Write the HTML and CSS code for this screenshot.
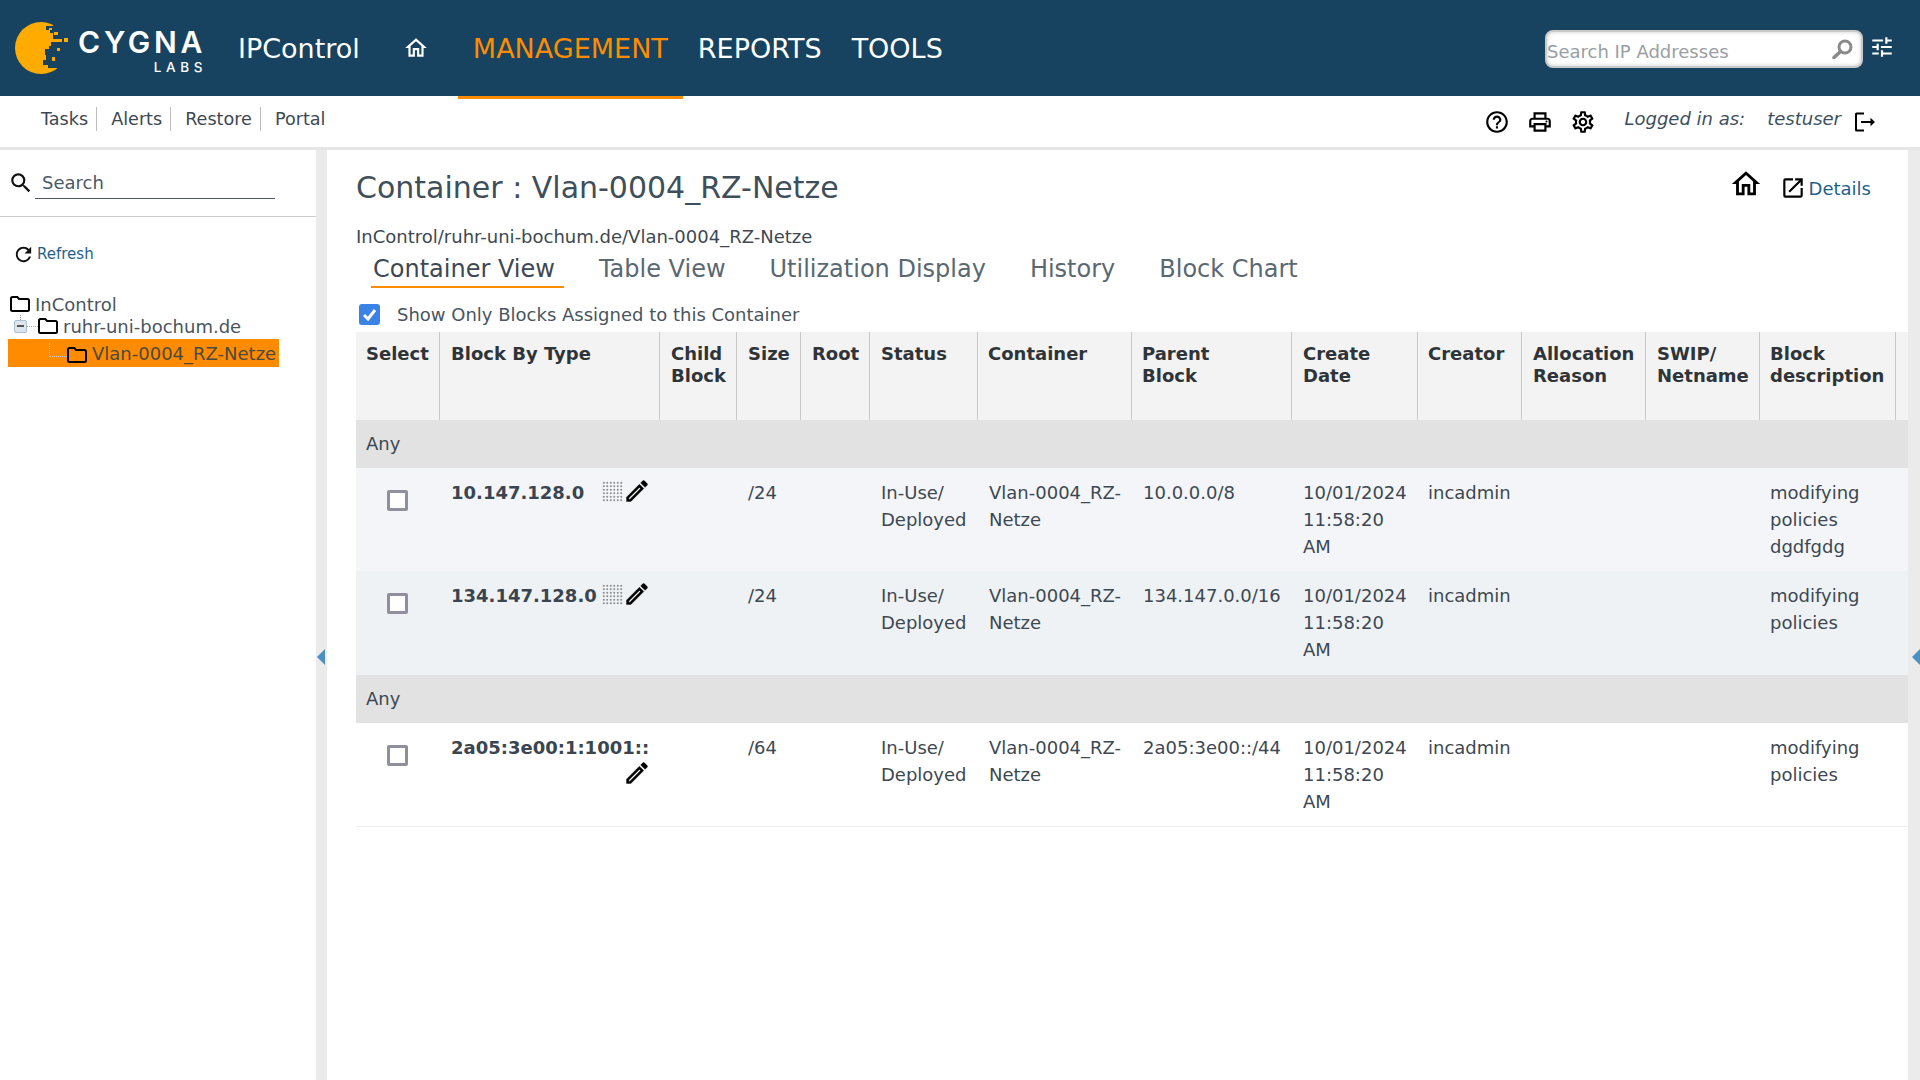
FILE: index.html
```html
<!DOCTYPE html>
<html lang="en">
<head>
<meta charset="utf-8">
<title>IPControl</title>
<link rel="stylesheet" href="styles.css">
</head>
<body>
<svg class="defs" aria-hidden="true">
  <symbol id="i-home" viewBox="0 0 24 24"><path d="M12 5.69l5 4.5V18h-2v-6H9v6H7v-7.81l5-4.5M12 3L2 12h3v8h6v-6h2v6h6v-8h3L12 3z"/></symbol>
  <symbol id="i-search" viewBox="0 0 24 24"><path d="M15.5 14h-.79l-.28-.27A6.471 6.471 0 0 0 16 9.5 6.5 6.5 0 1 0 9.5 16c1.61 0 3.09-.59 4.23-1.57l.27.28v.79l5 4.99L20.49 19l-4.99-5zm-6 0C7.01 14 5 11.99 5 9.5S7.01 5 9.5 5 14 7.01 14 9.5 11.99 14 9.5 14z"/></symbol>
  <symbol id="i-lens" viewBox="0 0 22 20"><circle cx="9" cy="8" r="6" fill="none" stroke="#8a8a8a" stroke-width="3"/><path d="M13.500 12.500L20 18.500" fill="none" stroke="#8a8a8a" stroke-width="3.600" stroke-linecap="round"/></symbol>
  <symbol id="i-tune" viewBox="0 0 24 24"><path d="M3 17v2h6v-2H3zM3 5v2h10V5H3zm10 16v-2h8v-2h-8v-2h-2v6h2zM7 9v2H3v2h4v2h2V9H7zm14 4v-2H11v2h10zm-6-4h2V7h4V5h-4V3h-2v6z"/></symbol>
  <symbol id="i-help" viewBox="0 0 24 24"><path d="M11 18h2v-2h-2v2zm1-16C6.48 2 2 6.48 2 12s4.48 10 10 10 10-4.48 10-10S17.52 2 12 2zm0 18c-4.41 0-8-3.59-8-8s3.59-8 8-8 8 3.59 8 8-3.59 8-8 8zm0-14c-2.21 0-4 1.79-4 4h2c0-1.1.9-2 2-2s2 .9 2 2c0 2-3 1.75-3 5h2c0-2.25 3-2.5 3-5 0-2.21-1.79-4-4-4z"/></symbol>
  <symbol id="i-print" viewBox="0 0 24 24"><path d="M19 8h-1V3H6v5H5c-1.66 0-3 1.34-3 3v6h4v4h12v-4h4v-6c0-1.66-1.34-3-3-3zM8 5h8v3H8V5zm8 12v2H8v-4h8v2zm2-2v-2H6v2H4v-4c0-.55.45-1 1-1h14c.55 0 1 .45 1 1v4h-2z"/><circle cx="18" cy="11.5" r="1"/></symbol>
  <symbol id="i-gear" viewBox="0 0 24 24"><path d="M19.43 12.98c.04-.32.07-.64.07-.98 0-.34-.03-.66-.07-.98l2.11-1.65c.19-.15.24-.42.12-.64l-2-3.46c-.09-.16-.26-.25-.44-.25-.06 0-.12.01-.17.03l-2.49 1c-.52-.4-1.08-.73-1.69-.98l-.38-2.65C14.46 2.18 14.25 2 14 2h-4c-.25 0-.46.18-.49.42l-.38 2.65c-.61.25-1.17.59-1.69.98l-2.49-1c-.06-.02-.12-.03-.18-.03-.17 0-.34.09-.43.25l-2 3.46c-.13.22-.07.49.12.64l2.11 1.65c-.04.32-.07.65-.07.98 0 .33.03.66.07.98l-2.11 1.65c-.19.15-.24.42-.12.64l2 3.46c.09.16.26.25.44.25.06 0 .12-.01.17-.03l2.49-1c.52.4 1.08.73 1.69.98l.38 2.65c.03.24.24.42.49.42h4c.25 0 .46-.18.49-.42l.38-2.65c.61-.25 1.17-.59 1.69-.98l2.49 1c.06.02.12.03.18.03.17 0 .34-.09.43-.25l2-3.46c.12-.22.07-.49-.12-.64l-2.11-1.65zm-1.98-1.71c.04.31.05.52.05.73 0 .21-.02.43-.05.73l-.14 1.13.89.7 1.08.84-.7 1.21-1.27-.51-1.04-.42-.9.68c-.43.32-.84.56-1.25.73l-1.06.43-.16 1.13-.2 1.35h-1.4l-.19-1.35-.16-1.13-1.06-.43c-.43-.18-.83-.41-1.23-.71l-.91-.7-1.06.43-1.27.51-.7-1.21 1.08-.84.89-.7-.14-1.13c-.03-.31-.05-.54-.05-.74s.02-.43.05-.73l.14-1.13-.89-.7-1.08-.84.7-1.21 1.27.51 1.04.42.9-.68c.43-.32.84-.56 1.25-.73l1.06-.43.16-1.13.2-1.35h1.39l.19 1.35.16 1.13 1.06.43c.43.18.83.41 1.23.71l.91.7 1.06-.43 1.27-.51.7 1.21-1.07.85-.89.7.14 1.13zM12 8c-2.21 0-4 1.79-4 4s1.79 4 4 4 4-1.79 4-4-1.79-4-4-4zm0 6c-1.1 0-2-.9-2-2s.9-2 2-2 2 .9 2 2-.9 2-2 2z"/></symbol>
  <symbol id="i-logout" viewBox="0 0 24 24"><path d="M12 2.5H4.5a1.5 1.5 0 0 0-1.5 1.5v16a1.5 1.5 0 0 0 1.5 1.5H12v-2H5V4.500h7z"/><path d="M9 11h9.500V7.800L23 12l-4.500 4.200V13H9z"/></symbol>
  <symbol id="i-open" viewBox="0 0 24 24"><path d="M19 19H5V5h7V3H5a2 2 0 0 0-2 2v14a2 2 0 0 0 2 2h14c1.100 0 2-.9 2-2v-7h-2v7zM14 3v2h3.590l-9.830 9.830 1.410 1.410L19 6.410V10h2V3h-7z"/></symbol>
  <symbol id="i-refresh" viewBox="0 0 24 24"><path d="M17.650 6.350C16.200 4.900 14.210 4 12 4c-4.420 0-7.990 3.580-7.990 8s3.570 8 7.990 8c3.730 0 6.840-2.550 7.730-6h-2.080c-.82 2.330-3.040 4-5.650 4-3.310 0-6-2.690-6-6s2.690-6 6-6c1.660 0 3.140.69 4.220 1.780L13 11h7V4l-2.350 2.350z"/></symbol>
  <symbol id="i-pencil" viewBox="0 0 24 24"><path d="M3 17.250V21h3.750L17.810 9.940l-3.750-3.750L3 17.250zM5.920 19H5v-.92l9.060-9.060.92.92L5.920 19zM20.710 5.630l-2.340-2.340c-.2-.2-.45-.29-.71-.29s-.51.1-.7.29l-1.830 1.830 3.750 3.750 1.830-1.830c.39-.39.39-1.020 0-1.410z"/></symbol>
  <symbol id="i-folder" viewBox="0 0 20 16"><path d="M2.500 1h4.800l1.800 2h8.400A1.500 1.500 0 0 1 19 4.500v9a1.500 1.500 0 0 1-1.500 1.500h-15A1.500 1.500 0 0 1 1 13.500v-11A1.500 1.500 0 0 1 2.500 1z" fill="none" stroke="#000" stroke-width="2"/></symbol>
  <symbol id="i-check" viewBox="0 0 21 21"><path d="M5 11l4 4 7-9" fill="none" stroke="#fff" stroke-width="3"/></symbol>
  <clipPath id="moon-clip"><path d="M0 0H38V4H31V8H35V11H38V17H47V20H36V24H34V27H30V33H31V38H28V43H33V46H43V52H0z"/></clipPath>
</svg>

<header class="topbar">
  <div class="logo">
    <svg class="logo-mark" viewBox="0 0 56 52">
      <circle cx="26" cy="26" r="26" fill="#ffab00" clip-path="url(#moon-clip)"/>
      <g fill="#ffab00">
        <rect x="39" y="10" width="4" height="3"/>
        <rect x="49" y="16" width="4" height="4"/>
        <rect x="42" y="26" width="3" height="3"/>
        <rect x="37" y="35" width="3" height="4"/>
        <rect x="34" y="6" width="3" height="2"/>
      </g>
    </svg>
    <div class="logo-text">
      <span class="logo-name">CYGNA</span>
      <span class="logo-sub">LABS</span>
    </div>
  </div>
  <span class="app-name">IPControl</span>
  <svg class="nav-home"><use href="#i-home"/></svg>
  <nav class="nav">
    <a class="nav-item nav-active">MANAGEMENT</a>
    <a class="nav-item">REPORTS</a>
    <a class="nav-item">TOOLS</a>
  </nav>
  <div class="ip-search">
    <input class="ip-input" type="text" placeholder="Search IP Addresses">
    <svg class="ip-icon"><use href="#i-lens"/></svg>
  </div>
  <svg class="tune"><use href="#i-tune"/></svg>
</header>

<div class="subbar">
  <div class="sublinks">
    <a class="sublink">Tasks</a>
    <a class="sublink">Alerts</a>
    <a class="sublink">Restore</a>
    <a class="sublink sublink-last">Portal</a>
  </div>
  <div class="tools">
    <svg class="tool"><use href="#i-help"/></svg>
    <svg class="tool"><use href="#i-print"/></svg>
    <svg class="tool"><use href="#i-gear"/></svg>
    <span class="login login-label">Logged in as:</span>
    <span class="login login-user">testuser</span>
    <svg class="tool tool-logout"><use href="#i-logout"/></svg>
  </div>
</div>

<div class="body">
  <aside class="sidebar">
    <div class="side-search">
      <svg class="side-search-icon"><use href="#i-search"/></svg>
      <input class="side-input" type="text" placeholder="Search">
    </div>
    <a class="refresh"><svg class="refresh-icon"><use href="#i-refresh"/></svg>Refresh</a>
    <ul class="tree">
      <li class="node node-root"><svg class="folder"><use href="#i-folder"/></svg><span>InControl</span></li>
      <li class="node node-site"><span class="expander"></span><span class="connector"></span><svg class="folder"><use href="#i-folder"/></svg><span>ruhr-uni-bochum.de</span></li>
      <li class="node node-leaf"><span class="elbow"></span><svg class="folder"><use href="#i-folder"/></svg><span>Vlan-0004_RZ-Netze</span></li>
    </ul>
  </aside>
  <div class="splitter"><span class="arrow"></span></div>
  <main class="main">
    <div class="title-row">
      <h1 class="title">Container : Vlan-0004_RZ-Netze</h1>
      <svg class="title-home"><use href="#i-home"/></svg>
      <svg class="title-open"><use href="#i-open"/></svg>
      <a class="details">Details</a>
    </div>
    <div class="crumb">InControl/ruhr-uni-bochum.de/Vlan-0004_RZ-Netze</div>
    <div class="tabs">
      <a class="tab tab-active">Container View</a>
      <a class="tab">Table View</a>
      <a class="tab">Utilization Display</a>
      <a class="tab">History</a>
      <a class="tab">Block Chart</a>
    </div>
    <div class="only">
      <span class="only-box"><svg class="only-check"><use href="#i-check"/></svg></span>
      <span>Show Only Blocks Assigned to this Container</span>
    </div>
    <table class="grid">
      <colgroup>
        <col class="c-select"><col class="c-block"><col class="c-child"><col class="c-size"><col class="c-root"><col class="c-status"><col class="c-container"><col class="c-parent"><col class="c-date"><col class="c-creator"><col class="c-alloc"><col class="c-swip"><col class="c-desc"><col class="c-rest">
      </colgroup>
      <thead>
        <tr>
          <th>Select</th><th>Block By Type</th><th>Child Block</th><th>Size</th><th>Root</th><th>Status</th><th>Container</th><th>Parent<br>Block</th><th>Create Date</th><th>Creator</th><th>Allocation Reason</th><th>SWIP/ Netname</th><th>Block description</th><th class="th-rest"></th>
        </tr>
      </thead>
      <tbody>
        <tr class="group"><td colspan="14">Any</td></tr>
        <tr class="row row-a">
          <td class="sel"><span class="cb"></span></td>
          <td><div class="block"><b>10.147.128.0</b><span class="acts"><span class="dots"></span><svg class="pencil"><use href="#i-pencil"/></svg></span></div></td>
          <td></td><td>/24</td><td></td><td>In-Use/ Deployed</td><td>Vlan-0004_RZ-Netze</td><td>10.0.0.0/8</td><td>10/01/2024 11:58:20 AM</td><td>incadmin</td><td></td><td></td><td>modifying policies dgdfgdg</td><td></td>
        </tr>
        <tr class="row row-b">
          <td class="sel"><span class="cb"></span></td>
          <td><div class="block"><b>134.147.128.0</b><span class="acts"><span class="dots"></span><svg class="pencil"><use href="#i-pencil"/></svg></span></div></td>
          <td></td><td>/24</td><td></td><td>In-Use/ Deployed</td><td>Vlan-0004_RZ-Netze</td><td>134.147.0.0/16</td><td>10/01/2024 11:58:20 AM</td><td>incadmin</td><td></td><td></td><td>modifying policies</td><td></td>
        </tr>
        <tr class="group"><td colspan="14">Any</td></tr>
        <tr class="row row-c">
          <td class="sel"><span class="cb"></span></td>
          <td><div class="block"><b>2a05:3e00:1:1001::</b><span class="acts"><svg class="pencil"><use href="#i-pencil"/></svg></span></div></td>
          <td></td><td>/64</td><td></td><td>In-Use/ Deployed</td><td>Vlan-0004_RZ-Netze</td><td>2a05:3e00::/44</td><td>10/01/2024 11:58:20 AM</td><td>incadmin</td><td></td><td></td><td>modifying policies</td><td></td>
        </tr>
      </tbody>
    </table>
  </main>
  <div class="edge"><span class="arrow"></span></div>
</div>
</body>
</html>
```
FILE: styles.css
```css
* { box-sizing: border-box; }
html, body { margin: 0; height: 1080px; overflow: hidden; }
body {
  width: 1920px;
  background: #fff;
  color: #3d4852;
  font-family: "DejaVu Sans", sans-serif;
  font-size: 18px;
  display: flex;
  flex-direction: column;
}
.defs { position: absolute; width: 0; height: 0; }

/* top bar */
.topbar {
  position: relative;
  z-index: 2;
  flex: none;
  height: 96px;
  background: #174360;
  color: #fff;
  display: flex;
  align-items: center;
  padding-left: 15px;
}
.logo { display: flex; align-items: flex-start; width: 188px; height: 52px; }
.logo-mark { width: 56px; height: 52px; flex: none; }
.logo-text {
  margin-left: 7px;
  width: 125px;
  display: flex;
  flex-direction: column;
  align-items: flex-end;
  font-family: Inter, sans-serif;
  font-weight: 500;
}
.logo-name { font-size: 30px; line-height: 29px; font-weight: 600; letter-spacing: 3.7px; margin-top: 6px; margin-right: -3px; white-space: nowrap; }
.logo-sub { font-size: 13.5px; line-height: 16px; letter-spacing: 4.6px; margin-top: 2px; margin-right: -4px; }
.app-name { margin-left: 35px; font-size: 27px; }
.nav-home { width: 26px; height: 26px; margin-left: 43px; fill: #fff; flex: none; }
.nav { display: flex; margin-left: 29px; align-self: flex-start; }
.nav-item {
  height: 99px;
  line-height: 98px;
  padding: 0 15px;
  font-size: 27px;
  color: #fff;
}
.nav-active { color: #ff8c00; border-bottom: 3px solid #ff8c00; }
.ip-search {
  position: relative;
  margin-left: auto;
  margin-top: 2px;
  width: 318px;
  height: 38px;
  flex: none;
}
.ip-input {
  width: 100%;
  height: 100%;
  border: 2px solid #c9c9c9;
  border-radius: 8px;
  padding: 4px 0 0 0;
  background: #fff;
  box-shadow: inset 0 0 4px #ccc;
  font: 18px "DejaVu Sans", sans-serif;
}
.ip-input::placeholder { color: #9a9ea3; opacity: 1; }
.ip-icon {
  position: absolute;
  right: 9px;
  top: 9px;
  width: 22px;
  height: 20px;
  transform: scaleX(-1);
}
.tune { width: 26px; height: 26px; margin: 0 25px 2px 6px; fill: #fff; flex: none; }

/* sub bar */
.subbar {
  flex: none;
  height: 54px;
  border-bottom: 3px solid #e6e6e6;
  display: flex;
  align-items: center;
  justify-content: space-between;
  padding: 0 44px 0 41px;
}
.sublinks { display: flex; margin-bottom: 5px; }
.sublink {
  font-size: 17.6px;
  line-height: 24px;
  padding-right: 8px;
  margin-right: 14px;
  border-right: 1px solid #bdbdbd;
}
.sublink-last { border-right: 0; padding-right: 0; margin-right: 0; }
.tools { display: flex; align-items: center; }
.tool { width: 26px; height: 26px; fill: #000; margin-right: 17px; flex: none; }
.tool-logout { margin: 0 0 0 11px; width: 24px; height: 24px; }
.login { font-style: italic; font-size: 18px; color: #3d4f5f; margin-bottom: 7px; }
.login-label { margin-left: 11px; }
.login-user { margin-left: 22px; }

/* body */
.body { flex: 1; min-height: 0; display: flex; }
.sidebar { flex: none; width: 316px; }
.side-search {
  display: flex;
  align-items: flex-end;
  height: 67px;
  padding-left: 8px;
  padding-bottom: 17px;
  border-bottom: 1px solid #ccc;
}
.side-search-icon { width: 26px; height: 26px; fill: #111; flex: none; margin-bottom: 3px; }
.side-input {
  margin-left: 1px;
  width: 240px;
  height: 32px;
  border: 0;
  border-bottom: 1px solid #4a5a68;
  padding: 0 0 1px 7px;
  outline: 0;
  font: 18px "DejaVu Sans", sans-serif;
}
.side-input::placeholder { color: #4a5a68; opacity: 1; }
.refresh {
  display: flex;
  align-items: center;
  margin: 25px 0 0 12px;
  height: 24px;
  font-size: 15px;
  color: #1f5f8b;
}
.refresh-icon { width: 23px; height: 23px; fill: #111; margin-right: 2px; flex: none; }
.tree { list-style: none; margin: 27px 0 0; padding: 0; color: #4a5560; }
.node { display: flex; align-items: center; height: 22px; }
.folder { width: 20px; height: 16px; flex: none; margin-right: 5px; }
.node-root { padding-left: 10px; }
.node-site { padding-left: 14px; position: relative; }
.expander {
  position: relative;
  flex: none;
  width: 13px;
  height: 13px;
  border-radius: 2px;
  border: 1px solid #a9bfd6;
  background: linear-gradient(#555 0 0) center / 7px 2px no-repeat, #dde4ec;
}
.expander::before {
  content: "";
  position: absolute;
  left: 5px;
  top: -6px;
  height: 5px;
  border-left: 1px dotted #999;
}
.connector { width: 11px; border-top: 1px dotted #aaa; flex: none; }
.node-leaf {
  margin: 2px 0 0 8px;
  width: 271px;
  height: 28px;
  padding-left: 41px;
  background: #ff8c00;
  color: #4b4a3f;
  white-space: nowrap;
}
.node-leaf .folder { margin-top: 3px; }
.elbow {
  flex: none;
  width: 18px;
  height: 14px;
  margin-top: -6px;
  border-left: 1px dotted #c9c9c9;
  border-bottom: 1px dotted #c9c9c9;
}
.splitter, .edge { background: #ebebeb; display: flex; align-items: center; flex: none; padding-top: 84px; }
.splitter { width: 11px; padding-left: 1px; }
.edge { width: 12px; justify-content: flex-end; }
.arrow {
  width: 0;
  height: 0;
  border-style: solid;
  border-width: 8px 8px 8px 0;
  border-color: transparent #4a90c2 transparent transparent;
}

/* main */
.main { flex: none; width: 1581px; padding: 21px 0 0 29px; overflow: hidden; }
.title-row { display: flex; align-items: center; height: 34px; padding-right: 37px; }
.title { margin: 0 auto 0 0; font-size: 30px; font-weight: 400; color: #3f4f5a; line-height: 34px; }
.title-home { width: 34px; height: 34px; fill: #000; margin-bottom: 9px; flex: none; }
.title-open { width: 26px; height: 26px; fill: #000; margin: 0 3px 0 17px; flex: none; }
.details { font-size: 18px; color: #1f5f8b; }
.crumb { margin-top: 18px; line-height: 27px; color: #3d4852; }
.tabs { display: flex; height: 34px; margin-top: 2px; padding-left: 15px; gap: 44px; }
.tab { font-size: 24px; line-height: 34px; color: #5a6872; white-space: nowrap; }
.tab-active { color: #3d4852; box-shadow: 0 2px 0 #ff8c00; padding: 0 9px 0 2px; margin-right: -9px; }
.only { display: flex; align-items: center; height: 46px; padding: 11px 0 0 3px; color: #4a5560; }
.only-box {
  width: 21px;
  height: 21px;
  border-radius: 3px;
  background: #3b82e6;
  margin-right: 17px;
  flex: none;
}
.only-check { display: block; width: 21px; height: 21px; }

.grid { table-layout: fixed; width: 1552px; border-collapse: separate; border-spacing: 0; }
.c-select { width: 84px; } .c-block { width: 220px; } .c-child { width: 77px; } .c-size { width: 64px; }
.c-root { width: 69px; } .c-status { width: 108px; } .c-container { width: 154px; } .c-parent { width: 160px; }
.c-date { width: 126px; } .c-creator { width: 104px; } .c-alloc { width: 124px; } .c-swip { width: 114px; }
.c-desc { width: 136px; } .c-rest { width: 12px; }
.grid th {
  height: 88px;
  vertical-align: top;
  text-align: left;
  padding: 11px 4px 0 11px;
  background: #f3f3f3;
  border-right: 1px solid #c8c8c8;
  color: #2f3438;
  font-size: 18px;
  line-height: 22px;
  font-weight: 700;
}
.grid th:nth-child(1), .grid th:nth-child(7), .grid th:nth-child(8), .grid th:nth-child(10), .grid th:nth-child(13) { padding-left: 10px; }
.grid th.th-rest { border-right: 0; padding: 0; }
.grid td { vertical-align: top; padding: 11px 8px 11px 11px; line-height: 27px; color: #3d4852; }
.row td:nth-child(10), .row td:nth-child(13) { padding-left: 10px; }
.group td { background: #e2e2e2; padding: 10px 10px 11px; }
.row-a td { background: #f3f5f9; }
.row-b td { background: #eff2f5; padding-bottom: 12px; }
.row-c td { background: #fff; border-bottom: 1px solid #eeeeee; }
.grid td.sel { padding: 11px 0 0; text-align: center; }
.cb {
  display: inline-block;
  width: 21px;
  height: 21px;
  border: 3px solid #8f8f9d;
  border-radius: 2px;
  background: #fff;
  margin-top: 11px;
  vertical-align: top;
  margin-right: 2px;
}
.block { display: flex; flex-wrap: wrap; justify-content: space-between; margin-right: 3px; }
.block b { color: #3b4550; white-space: nowrap; }
.acts { display: flex; margin-left: auto; height: 27px; align-items: flex-start; padding-top: 2px; }
.dots {
  width: 21px;
  height: 21px;
  background: radial-gradient(circle, #8a8a8a 0.9px, transparent 1.1px) 0 0 / 3.5px 3.5px;
}
.pencil { width: 28px; height: 28px; fill: #000; stroke: #000; stroke-width: .3; margin-top: -4px; margin-right: -2px; }
```
